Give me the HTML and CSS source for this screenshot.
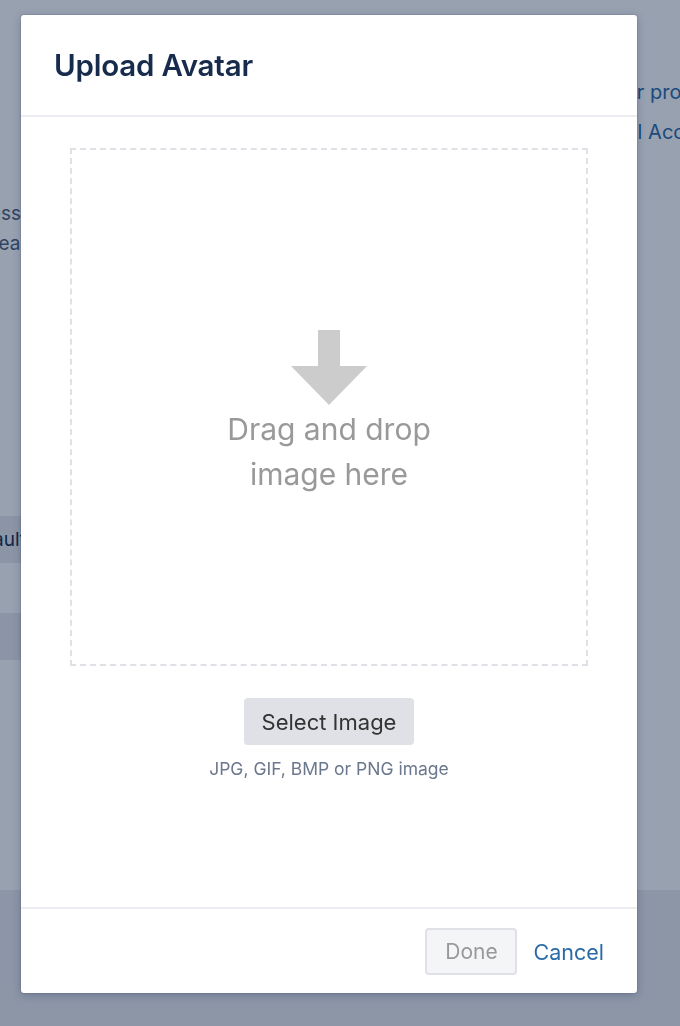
FILE: index.html
```html
<!DOCTYPE html>
<html lang="en">
<head>
    <meta charset="UTF-8">
    <meta name="viewport" content="width=device-width, initial-scale=1.0">
    <title>Upload Avatar</title>
    <link rel="stylesheet" href="styles.css">
</head>
<body>
    <div class="page">
        <div class="side-left">
            <div class="line line-1"><span>Profile access</span></div>
            <div class="line line-2"><span>Who can read</span></div>
            <div class="field field-1"><span>Default</span></div>
            <div class="field field-2"><span></span></div>
        </div>
        <div class="main"></div>
        <div class="side-right">
            <a class="link link-1" href="#">Your profile</a>
            <a class="link link-2" href="#">Email Account</a>
        </div>
    </div>
    <div class="page-foot"></div>

    <div class="blanket"></div>

    <div class="modal">
        <div class="modal-header">
            <h1>Upload Avatar</h1>
        </div>
        <div class="modal-body">
            <div class="dropzone">
                <svg class="arrow" width="76" height="76" viewBox="0 0 76 76">
                    <path d="M27 0h22v36h27L38 75 0 36h27z" fill="#cccccc"/>
                </svg>
                <p class="drop-text">Drag and drop<br>image here</p>
            </div>
            <button class="btn-select" type="button">Select Image</button>
            <p class="hint">JPG, GIF, BMP or PNG image</p>
        </div>
        <div class="modal-footer">
            <button class="btn-done" type="button" disabled>Done</button>
            <a class="btn-cancel" href="#">Cancel</a>
        </div>
    </div>
</body>
</html>
```

FILE: styles.css
```css
*{
    margin: 0;
    padding: 0;
    box-sizing: border-box;
}
body{
    font-family: Inter, "Noto Sans", sans-serif;
    background: #ebecf0;
    color: #172b4d;
    overflow: hidden;
}
.page{
    display: flex;
    height: 890px;
    background: #fff;
}
.side-left{
    width: 21px;
    overflow: hidden;
    padding-top: 199px;
}
.line{
    display: flex;
    justify-content: flex-end;
    white-space: nowrap;
    font-size: 19px;
    line-height: 30px;
    color: #505f79;
}
.line-2 span{
    margin-right: -11px;
}
.field{
    display: flex;
    justify-content: flex-end;
    align-items: center;
    white-space: nowrap;
    height: 47px;
    background: #e9ebee;
    font-size: 19px;
    color: #172b4d;
}
.field-1 span{
    margin-right: -5px;
}
.field-1{
    margin-top: 257px;
}
.field-2{
    margin-top: 50px;
}
.main{
    flex: 1;
}
.side-right{
    width: 82px;
    overflow: hidden;
    padding-top: 79px;
    display: flex;
    flex-direction: column;
    gap: 14px;
}
.link{
    display: block;
    white-space: nowrap;
    font-size: 20px;
    line-height: 26px;
    color: #2a6aa8;
    text-decoration: none;
}
.link-1{
    margin-left: 3px;
}
.link-2{
    margin-left: -6px;
}
.page-foot{
    height: 136px;
}
.blanket{
    position: fixed;
    top: 0;
    right: 0;
    bottom: 0;
    left: 0;
    background: rgba(9, 30, 66, 0.42);
}
.modal{
    position: fixed;
    top: 15px;
    left: 21px;
    width: 616px;
    height: 978px;
    background: #fff;
    border-radius: 3px;
    box-shadow: 0 0 0 1px rgba(9, 30, 66, 0.08), 0 2px 8px rgba(9, 30, 66, 0.25);
    display: flex;
    flex-direction: column;
}
.modal-header{
    height: 102px;
    padding: 33px 33px 0;
    border-bottom: 2px solid #ebecf0;
}
.modal-header h1{
    font-size: 29.5px;
    font-weight: 600;
    line-height: 34px;
    letter-spacing: -0.2px;
    color: #172b4d;
}
.modal-body{
    flex: 1;
    padding: 31px 49px 0;
    display: flex;
    flex-direction: column;
    align-items: center;
}
.dropzone{
    width: 518px;
    height: 518px;
    border: 2px dashed #dfe1e6;
    display: flex;
    flex-direction: column;
    align-items: center;
    padding-top: 180px;
}
.arrow{
    display: block;
}
.drop-text{
    margin-top: 1px;
    font-size: 30px;
    line-height: 45px;
    text-align: center;
    color: #999;
}
.btn-select{
    margin-top: 32px;
    height: 47px;
    padding: 0 18px;
    border: 0;
    border-radius: 4px;
    background: #dfe1e6;
    font-family: inherit;
    font-size: 22px;
    color: #333;
}
.hint{
    margin-top: 12px;
    font-size: 17.5px;
    line-height: 24px;
    color: #6b778c;
}
.modal-footer{
    height: 86px;
    border-top: 2px solid #ebecf0;
    display: flex;
    justify-content: flex-end;
    align-items: center;
    gap: 16px;
    padding: 1px 33px 0;
}
.btn-done{
    width: 92px;
    height: 47px;
    border: 2px solid #dfe1e6;
    border-radius: 4px;
    background: #f4f5f7;
    font-family: inherit;
    font-size: 21px;
    color: #999;
}
.btn-cancel{
    font-size: 21.5px;
    color: #2a6aa8;
    text-decoration: none;
}
```
